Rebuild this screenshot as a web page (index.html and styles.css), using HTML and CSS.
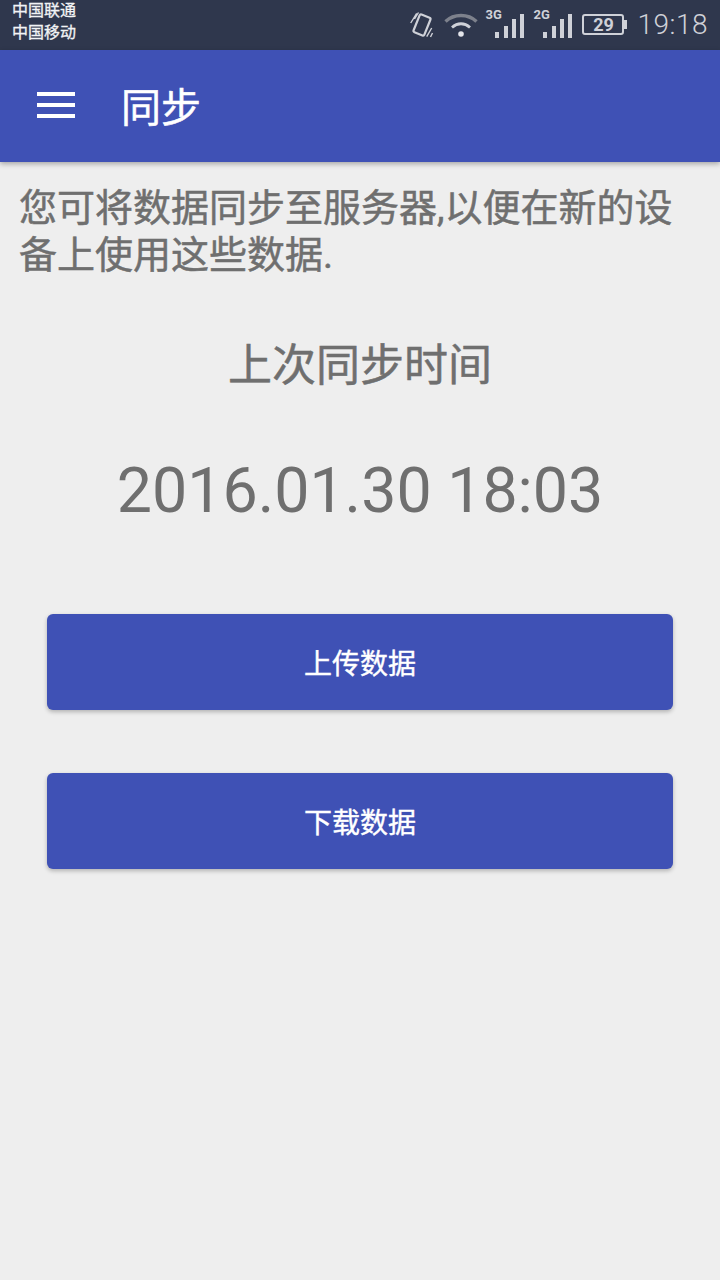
FILE: index.html
```html
<!DOCTYPE html>
<html lang="zh-CN">
<head>
    <meta charset="UTF-8">
    <meta name="viewport" content="width=device-width, initial-scale=1.0">
    <title>同步</title>
    <link rel="stylesheet" href="styles.css">
</head>
<body>

    <!-- Status Bar -->
    <div class="status-bar">
        <div class="carriers">
            <span>中国联通</span>
            <span>中国移动</span>
        </div>
        <div class="status-icons">
            <svg class="icon-vibrate" width="24" height="26" viewBox="0 0 24 26" fill="none" stroke="#cfd1d8">
                <rect x="6.200" y="3.500" width="11.600" height="19" rx="1.500" stroke-width="2.200" transform="rotate(22 12 13)"/>
                <path d="M6.700 1.300 0.700 11M8.500 0.500 4.500 7M21.700 16 16.700 24.700M22.500 21 20.500 25" stroke-width="1.400"/>
            </svg>
            <svg class="icon-wifi" width="34" height="26" viewBox="0 0 34 26" fill="none" stroke="#7d818c" stroke-width="3.400">
                <path d="M1.500 9.500C10 1.500 24 1.500 32.500 9.500"/>
                <path d="M8 15.500c5.500-5 12.500-5 18 0" stroke="#cfd1d8" stroke-width="2.800"/>
                <circle cx="17" cy="22" r="2.800" fill="#e4e5ea" stroke="none"/>
            </svg>
            <div class="signal">
                <span class="signal-label">3G</span>
                <div class="bars">
                    <i class="bar-1"></i><i class="bar-2"></i><i class="bar-3"></i><i class="bar-4"></i>
                </div>
            </div>
            <div class="signal">
                <span class="signal-label">2G</span>
                <div class="bars">
                    <i class="bar-1"></i><i class="bar-2"></i><i class="bar-3"></i><i class="bar-4"></i>
                </div>
            </div>
            <div class="battery"><span>29</span></div>
            <span class="clock">19:18</span>
        </div>
    </div>

    <!-- Toolbar -->
    <header class="toolbar">
        <div class="menu-icon"><i></i><i></i><i></i></div>
        <h1>同步</h1>
    </header>

    <!-- Content -->
    <main>
        <p class="intro">您可将数据同步至服务器,以便在新的设备上使用这些数据.</p>
        <p class="sync-label">上次同步时间</p>
        <p class="sync-time">2016.01.30 18:03</p>
        <div class="actions">
            <button class="action-button">上传数据</button>
            <button class="action-button">下载数据</button>
        </div>
    </main>

</body>
</html>
```

FILE: styles.css
```css
body {
    margin: 0;
    width: 720px;
    height: 1280px;
    overflow: hidden;
    background-color: #eeeeee;
    font-family: Roboto, "Noto Sans CJK SC", sans-serif;
}

/* Status Bar */
.status-bar {
    height: 50px;
    background-color: #2f374d;
    display: flex;
    justify-content: space-between;
    align-items: flex-start;
    padding: 0 12px 0 12px;
}

.carriers {
    display: flex;
    flex-direction: column;
    color: #f2f3f5;
    font-size: 16px;
    line-height: 22px;
    -webkit-text-stroke: 0.3px #f2f3f5;
}

.status-icons {
    display: flex;
    align-items: flex-start;
    padding-top: 12px;
}

.icon-vibrate {
    margin-right: 10px;
}

.icon-wifi {
    margin-right: 6px;
}

.signal {
    position: relative;
    width: 48px;
    height: 26px;
}

.signal-label {
    position: absolute;
    left: 1px;
    top: -4px;
    color: #cfd1d8;
    font-size: 13px;
    font-weight: 700;
    line-height: 14px;
}

.bars {
    position: absolute;
    left: 11px;
    bottom: 0;
    display: flex;
    align-items: flex-end;
    gap: 4.300px;
}

.bars i {
    display: block;
    width: 4px;
    background-color: #cfd1d8;
}

.bars .bar-1 { height: 6px; }
.bars .bar-2 { height: 12px; }
.bars .bar-3 { height: 19px; }
.bars .bar-4 { height: 24px; }

.battery {
    position: relative;
    box-sizing: border-box;
    width: 42px;
    height: 21px;
    margin: 2px 0 0 2px;
    border: 2px solid #cfd1d8;
    border-radius: 3px;
    color: #cfd1d8;
    font-size: 18px;
    font-weight: 700;
    line-height: 17px;
    text-align: center;
}

.battery::after {
    content: "";
    position: absolute;
    right: -5px;
    top: 4px;
    width: 3px;
    height: 9px;
    background-color: #cfd1d8;
}

.clock {
    margin-left: 13px;
    margin-top: -4px;
    color: #cfd1d8;
    font-size: 28px;
    line-height: 34px;
    font-weight: 300;
    letter-spacing: 0.5px;
}

/* Toolbar */
.toolbar {
    height: 112px;
    background-color: #3f51b5;
    display: flex;
    align-items: center;
    box-shadow: 0 2px 5px rgba(0, 0, 0, 0.3);
    position: relative;
}

.menu-icon {
    display: flex;
    flex-direction: column;
    gap: 7px;
    margin: 0 0 2px 37px;
}

.menu-icon i {
    display: block;
    width: 38px;
    height: 4px;
    background-color: #fff;
}

.toolbar h1 {
    margin: 5px 0 0 46px;
    color: #fff;
    font-size: 40px;
    font-weight: 400;
    line-height: 48px;
    -webkit-text-stroke: 0.5px #fff;
}

/* Content */
main {
    color: #6f6f6f;
}

.intro {
    margin: 0;
    padding: 23px 19px 0;
    font-size: 38px;
    line-height: 47px;
    -webkit-text-stroke: 0.5px #6f6f6f;
}

.sync-label {
    margin: 59px 0 0;
    font-size: 44px;
    line-height: 56px;
    text-align: center;
    -webkit-text-stroke: 0.5px #6f6f6f;
}

.sync-time {
    margin: 61px 0 0;
    font-size: 62.700px;
    line-height: 72px;
    text-align: center;
}

/* Buttons */
.actions {
    display: flex;
    flex-direction: column;
    gap: 63px;
    margin: 87px 47px 0;
}

.action-button {
    height: 96px;
    border: none;
    border-radius: 6px;
    background-color: #3f51b5;
    color: #fff;
    font-family: inherit;
    font-size: 28px;
    font-weight: 400;
    -webkit-text-stroke: 0.4px #fff;
    box-shadow: 0 2px 4px rgba(0, 0, 0, 0.25);
}
```
